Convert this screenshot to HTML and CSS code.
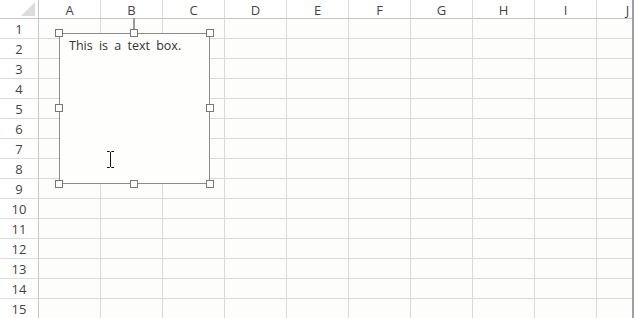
FILE: index.html
```html
<!DOCTYPE html>
<html lang="en">
<head>
    <meta charset="UTF-8">
    <title>Text box</title>
    <link rel="stylesheet" href="styles.css">
</head>
<body>
    <div class="sheet">
        <div class="grid" id="grid">
            <div class="cell corner"><span class="tri"></span></div>
        </div>

        <div class="rotate-line"></div>
        <div class="textbox">
            <p class="textbox-text">This is a text box.</p>
            <span class="handle h-tl"></span>
            <span class="handle h-tc"></span>
            <span class="handle h-tr"></span>
            <span class="handle h-ml"></span>
            <span class="handle h-mr"></span>
            <span class="handle h-bl"></span>
            <span class="handle h-bc"></span>
            <span class="handle h-br"></span>
        </div>

        <svg class="ibeam" width="9" height="17" viewBox="0 0 9 17">
            <path d="M1 0.5h2.5l1 1 1-1H8M4.5 1.5v14M1 16.5h2.5l1-1 1 1H8" fill="none" stroke="#111" stroke-width="1"/>
        </svg>

        <div class="edge"></div>
    </div>

    <script>
        // Construir la cuadrícula de la hoja
        const grid = document.getElementById('grid');
        const cols = ['A', 'B', 'C', 'D', 'E', 'F', 'G', 'H', 'I', 'J'];

        cols.forEach(c => {
            const cell = document.createElement('div');
            cell.className = 'cell col-head';
            cell.textContent = c;
            grid.appendChild(cell);
        });

        for (let r = 1; r <= 15; r++) {
            const head = document.createElement('div');
            head.className = 'cell row-head';
            head.textContent = r;
            grid.appendChild(head);
            cols.forEach(() => {
                const cell = document.createElement('div');
                cell.className = 'cell';
                grid.appendChild(cell);
            });
        }
    </script>
</body>
</html>
```

FILE: styles.css
```css
* {
    box-sizing: border-box;
    margin: 0;
    padding: 0;
}

body {
    background-color: #fdfdfc;
    font-family: 'Open Sans', 'Noto Sans', sans-serif;
    overflow: hidden;
    width: 634px;
    height: 318px;
}

.sheet {
    position: relative;
    width: 634px;
    height: 318px;
    overflow: hidden;
}

.grid {
    display: grid;
    grid-template-columns: 39px repeat(10, 62px);
    grid-template-rows: 19px repeat(15, 20px);
}

.cell {
    border-right: 1px solid #d9d9d9;
    border-bottom: 1px solid #d9d9d9;
}

.col-head,
.row-head,
.corner {
    display: flex;
    align-items: center;
    justify-content: center;
    font-size: 13px;
    color: #444;
    background-color: #fff;
}

.col-head {
    border-bottom-color: #c6c6c6;
    border-right-color: #dcdcdc;
    padding-top: 1px;
}

.row-head {
    border-right-color: #c6c6c6;
    border-bottom-color: #dcdcdc;
    padding-top: 1px;
}

.corner {
    position: relative;
    border-bottom-color: #c6c6c6;
    border-right-color: #c6c6c6;
}

.tri {
    position: absolute;
    right: 3px;
    bottom: 2px;
    width: 0;
    height: 0;
    border-left: 14px solid transparent;
    border-bottom: 14px solid #dcdcdc;
}

.rotate-line {
    position: absolute;
    left: 133px;
    top: 18px;
    width: 2px;
    height: 15px;
    background-color: #9c9c9c;
}

.textbox {
    position: absolute;
    left: 59px;
    top: 33px;
    width: 151px;
    height: 151px;
    border: 1px solid #8c8c8c;
    background-color: #fefefd;
}

.textbox-text {
    padding: 3px 0 0 9px;
    font-size: 12.5px;
    color: #333;
    word-spacing: 3px;
    line-height: 18px;
}

.handle {
    position: absolute;
    width: 8px;
    height: 8px;
    background-color: #fff;
    border: 1px solid #777;
}

.h-tl { left: -5px; top: -5px; }
.h-tc { left: 70px; top: -5px; }
.h-tr { right: -5px; top: -5px; }
.h-ml { left: -5px; top: 70px; }
.h-mr { right: -5px; top: 70px; }
.h-bl { left: -5px; bottom: -5px; }
.h-bc { left: 70px; bottom: -5px; }
.h-br { right: -5px; bottom: -5px; }

.ibeam {
    position: absolute;
    left: 106px;
    top: 151px;
}

.edge {
    position: absolute;
    right: 0;
    top: 0;
    width: 2px;
    height: 318px;
    background-color: #a0a0a0;
}
```
